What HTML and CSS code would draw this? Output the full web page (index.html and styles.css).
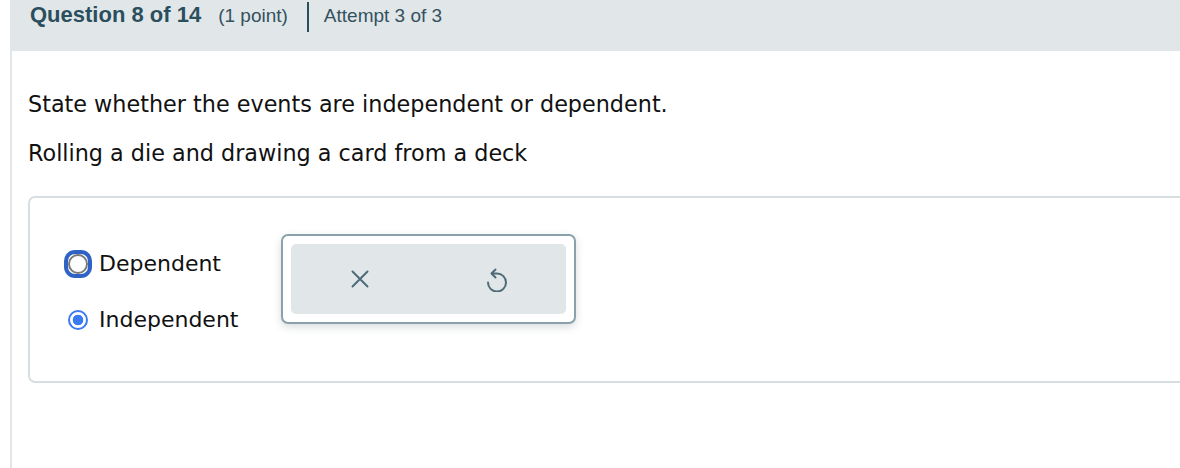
FILE: index.html
```html
<!DOCTYPE html>
<html>
<head>
<meta charset="utf-8">
<link rel="stylesheet" href="styles.css">
</head>
<body>
<div class="panel">
  <div class="header">
    <span class="q-title">Question 8 of 14</span>
    <span class="q-points">(1 point)</span>
    <span class="divider"></span>
    <span class="q-attempt">Attempt 3 of 3</span>
  </div>
  <div class="content">
    <p class="prompt">State whether the events are independent or dependent.</p>
    <p class="prompt second">Rolling a die and drawing a card from a deck</p>
    <div class="card">
      <div class="options">
        <label class="option">
          <span class="radio focus"></span>
          <span class="label-text">Dependent</span>
        </label>
        <label class="option">
          <span class="radio checked"></span>
          <span class="label-text">Independent</span>
        </label>
      </div>
      <div class="btn-group">
        <div class="btn-inner">
          <button class="icon-btn" aria-label="Clear">
            <svg width="18" height="18" viewBox="0 0 18 18"><path d="M1.5 1.5 L16.5 16.5 M16.5 1.5 L1.5 16.5" stroke="#4d6b78" stroke-width="2" fill="none" stroke-linecap="round"/></svg>
          </button>
          <button class="icon-btn" aria-label="Reset">
            <svg width="24" height="26" viewBox="0 -1.5 24 26"><path d="M7 6 H12 A9 9 0 1 1 3 15" stroke="#4d6b78" stroke-width="2" fill="none" stroke-linecap="round"/><path d="M10.5 2 L6.5 6 L10.5 10" stroke="#4d6b78" stroke-width="2" fill="none" stroke-linecap="round" stroke-linejoin="round"/></svg>
          </button>
        </div>
      </div>
    </div>
  </div>
</div>
</body>
</html>
```

FILE: styles.css
```css
html, body {
  margin: 0;
  padding: 0;
  background: #ffffff;
  overflow: hidden;
}
body {
  width: 1180px;
  height: 468px;
}
.panel {
  margin-left: 10px;
  height: 468px;
}
.header {
  box-sizing: border-box;
  background: #e1e7e9;
  height: 51px;
  display: flex;
  align-items: baseline;
  padding: 3px 0 0 20px;
  font-family: "Liberation Sans", Arial, sans-serif;
  color: #2b4e5d;
}
.q-title {
  font-weight: bold;
  font-size: 22px;
  line-height: 24px;
}
.q-points {
  font-size: 19px;
  line-height: 24px;
  margin-left: 17px;
  color: #34515e;
}
.divider {
  align-self: flex-start;
  width: 2px;
  height: 30px;
  background: #2b4e5d;
  margin: -1px 15px 0 19px;
}
.q-attempt {
  font-size: 19px;
  line-height: 24px;
  color: #34515e;
}
.content {
  border-left: 2px solid #e1e7e9;
  padding: 39px 0 0 16px;
  height: 378px;
  font-family: "DejaVu Sans", Verdana, sans-serif;
  color: #111111;
}
.prompt {
  margin: 0;
  font-size: 22.3px;
  line-height: 28px;
}
.prompt.second {
  margin-top: 21px;
}
.card {
  box-sizing: border-box;
  margin-top: 29px;
  margin-right: -30px;
  height: 187px;
  border: 2px solid #d7dee1;
  border-radius: 7px;
  display: flex;
  align-items: flex-start;
  padding: 36px 0 0 38px;
}
.options {
  display: flex;
  flex-direction: column;
  gap: 28px;
  padding-top: 16px;
  width: 213px;
}
.option {
  display: flex;
  align-items: center;
  height: 28px;
}
.radio {
  position: relative;
  box-sizing: border-box;
  width: 20px;
  height: 20px;
  border-radius: 50%;
  margin-right: 11px;
  background: #fff;
  flex: none;
}
.radio.focus {
  border: 2px solid #7a7a7a;
}
.radio.focus::before {
  content: "";
  position: absolute;
  left: -6px;
  top: -6px;
  width: 20px;
  height: 20px;
  border: 4px solid #2f62c6;
  border-radius: 11px;
}
.radio.checked {
  border: 2px solid #3a7af2;
  background: radial-gradient(circle, #3a7af2 0 5px, #fff 5.6px);
}
.label-text {
  font-size: 22px;
  line-height: 28px;
}
.btn-group {
  box-sizing: border-box;
  width: 295px;
  height: 90px;
  border: 2px solid #8aa1ab;
  border-radius: 7px;
  background: #fff;
  padding: 8px;
  box-shadow: 0 3px 8px rgba(40, 60, 70, 0.18);
}
.btn-inner {
  height: 100%;
  background: #e1e7e9;
  border-radius: 5px;
  display: flex;
  align-items: center;
}
.icon-btn {
  flex: 1;
  height: 100%;
  background: transparent;
  border: none;
  padding: 0;
  display: flex;
  align-items: center;
  justify-content: center;
}
```
